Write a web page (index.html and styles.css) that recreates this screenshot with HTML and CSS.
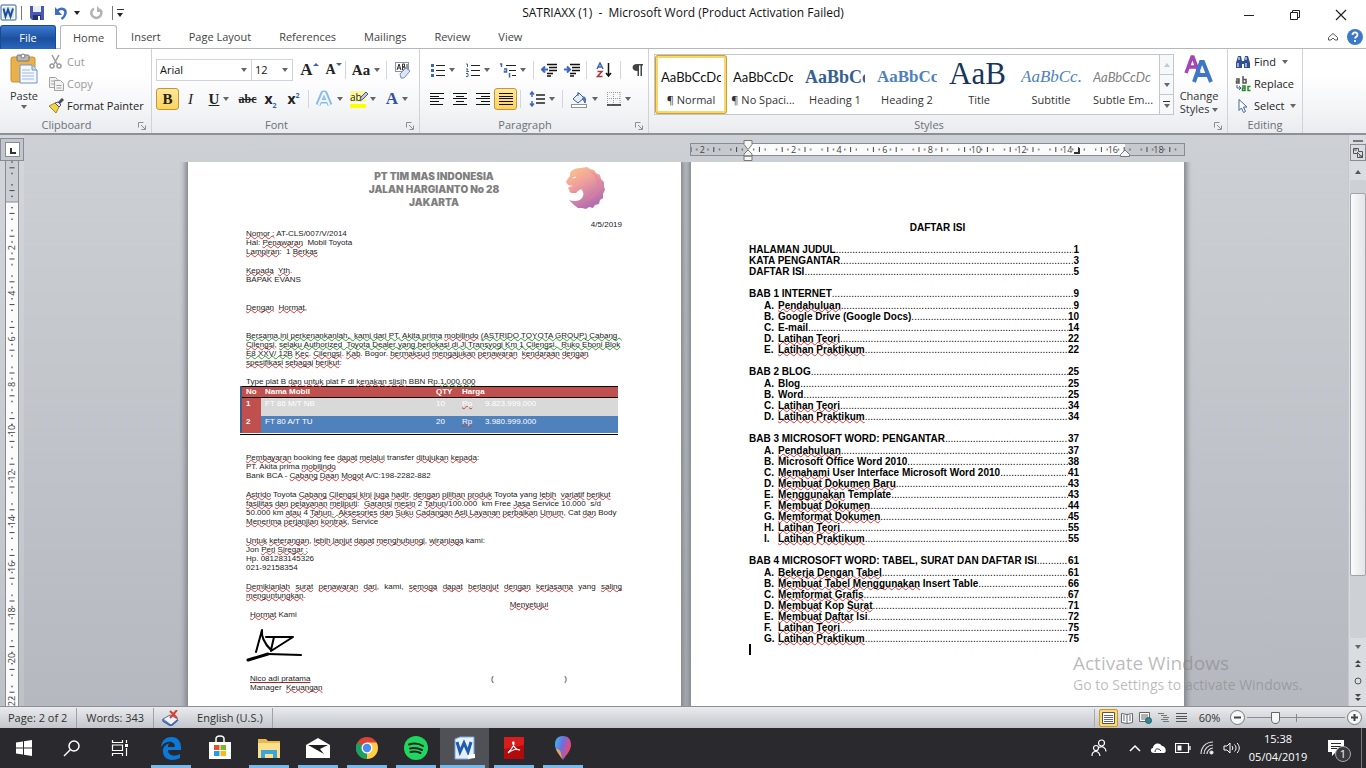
FILE: index.html
```html
<!DOCTYPE html>
<html lang="en">
<head>
<meta charset="utf-8">
<title>SATRIAXX (1) - Microsoft Word</title>
<link rel="stylesheet" href="styles.css">
</head>
<body>
<header class="titlebar">
  <div class="quick">
    <svg width="18" height="18" viewBox="0 0 18 18"><rect x="1" y="1" width="15" height="15" rx="1" fill="#fff" stroke="#2a5fa8"/><rect x="3" y="3" width="11" height="11" fill="#dce9f7"/><path d="M3.500 4.500l2 8 2.500-7 2.500 7 2.500-8" fill="none" stroke="#1f4f9b" stroke-width="2"/></svg>
    <i class="bar"></i>
    <button class="qbtn" aria-label="Save"><svg width="16" height="16" viewBox="0 0 16 16"><path d="M1 1h14v14H3l-2-2z" fill="#4a58b4"/><rect x="4" y="1" width="8" height="6" fill="#e9eefb"/><rect x="4" y="10" width="8" height="5" fill="#24306f"/><rect x="9" y="11" width="2" height="4" fill="#fff"/></svg></button>
    <button class="qbtn undo" aria-label="Undo"><svg width="14" height="14" viewBox="0 0 14 14"><path d="M3 5c4-4 9-2 8.500 2-.3 3-2 4.500-4 6" fill="none" stroke="#3f6cc4" stroke-width="2.500"/><path d="M1 1v8h7z" fill="#3f6cc4"/></svg><i class="tri dark"></i></button>
    <button class="qbtn" aria-label="Repeat"><svg width="14" height="14" viewBox="0 0 14 14"><path d="M4 2.500a5 5 0 1 0 6 1" fill="none" stroke="#b3b3b3" stroke-width="2.500"/><path d="M7 0v6h6z" fill="#b3b3b3"/></svg></button>
    <i class="bar"></i>
    <button class="more" aria-label="Customize Quick Access Toolbar"><i class="dash"></i><i class="tri dark"></i></button>
  </div>
  <h1>SATRIAXX (1)&nbsp; -&nbsp; Microsoft Word (Product Activation Failed)</h1>
  <div class="winbtns">
    <button aria-label="Minimize"><svg width="12" height="12"><path d="M1 6.500h10" stroke="#222"/></svg></button>
    <button aria-label="Restore"><svg width="12" height="12" fill="none" stroke="#222"><path d="M1.500 3.500h7v7h-7zM3.500 3v-1.500h7v7H9"/></svg></button>
    <button aria-label="Close"><svg width="12" height="12"><path d="M1 1l10 10M11 1L1 11" stroke="#222" stroke-width="1.200"/></svg></button>
  </div>
</header>

<nav class="tabs">
  <button class="file">File</button>
  <button class="on">Home</button>
  <button>Insert</button><button>Page Layout</button><button>References</button><button>Mailings</button><button>Review</button><button>View</button>
  <div class="help">
    <button aria-label="Minimize the Ribbon"><svg width="12" height="12" fill="none" stroke="#555"><path d="M1.500 6.500L6 2.500l4.500 4v2.500H8L6 7 4 9H1.500z"/></svg></button>
    <button aria-label="Help"><svg width="16" height="16"><circle cx="8" cy="8" r="8" fill="#3b78c9"/><path d="M5.500 6c0-3.500 5-3.500 5 0 0 1.500-2.500 2-2.500 3.500M8 11v2" fill="none" stroke="#fff" stroke-width="1.800"/></svg></button>
  </div>
</nav>

<section class="ribbon">
  <div class="group clip">
    <div class="body">
      <button class="big paste"><svg width="30" height="32" viewBox="0 0 30 32"><rect x="2" y="4" width="24" height="25" rx="2" fill="#e9b14c" stroke="#c48f35"/><rect x="8" y="2" width="12" height="6" rx="1" fill="#b9b9b9" stroke="#777"/><circle cx="14" cy="3" r="2" fill="#fff" stroke="#777"/><path d="M11 12h12l5 5v13H11z" fill="#f5f9ff" stroke="#6d94c9"/><path d="M23 12v5h5" fill="#cddff5" stroke="#6d94c9"/><path d="M13 17h8M13 20h12M13 23h12M13 26h12" stroke="#9bb9e0"/></svg><span>Paste</span><i class="tri"></i></button>
      <div class="stack">
        <button class="off"><svg width="16" height="16" fill="none" stroke="#9a9a9a" stroke-width="1.500"><path d="M4 1l5 9M11 1L6 10"/><circle cx="4" cy="12" r="2"/><circle cx="11" cy="12" r="2"/></svg>Cut</button>
        <button class="off"><svg width="16" height="16" fill="#f2f2f2" stroke="#a2a2a2"><path d="M1.500 1.500h6l2 2v8h-8z"/><path d="M6.500 4.500h6l3 3v7h-9zM8.500 9.500h5M8.500 12h5M3 5h3M3 8h3"/></svg>Copy</button>
        <button><svg width="16" height="16" viewBox="0 0 16 16"><path d="M1 8l6-3 4 4-3 6z" fill="#f1d24c" stroke="#a5832a"/><path d="M7 5l3-1 3 3-2 2z" fill="#e6e6ef" stroke="#555"/><path d="M11 5l4-4" stroke="#4a4a6a" stroke-width="3"/></svg>Format Painter</button>
      </div>
    </div>
    <footer>Clipboard<svg class="launch" width="8" height="8" fill="none" stroke="#8a8f96"><path d="M.5 5.500v-5h5M3 3l4 4M7.500 3.500v4h-4"/></svg></footer>
  </div>

  <div class="group font">
    <div class="body two">
      <div class="line">
        <label class="combo face"><select aria-label="Font"><option>Arial</option></select><i class="tri"></i></label>
        <label class="combo size"><select aria-label="Font size"><option>12</option></select><i class="tri"></i></label>
        <button class="t wide serif" aria-label="Grow Font"><b class="g16">A</b><i class="caret up"></i></button>
        <button class="t serif" aria-label="Shrink Font"><b class="g13">A</b><i class="caret"></i></button>
        <i class="sep"></i>
        <button class="t drop serif"><b class="g14">Aa</b><i class="tri"></i></button>
        <i class="sep"></i>
        <button class="t wide" aria-label="Clear Formatting"><svg width="18" height="18" viewBox="0 0 18 18"><rect x="1.500" y="1.500" width="13" height="9" fill="#fff" stroke="#8793a8"/><path d="M3 9l2-6 2 6M4 7h2M8.500 3v6h2.500V6H8.500h2V3zM13 3v6" fill="none" stroke="#333"/><path d="M6 13l6-6 4 3-6 7H7z" fill="#dbe6f8" stroke="#7d8fb5"/></svg></button>
      </div>
      <div class="line">
        <button class="t on serif"><b class="g14">B</b></button>
        <button class="t serif"><i class="g14 it">I</i></button>
        <button class="t drop serif"><u class="g14 bo">U</u><i class="tri"></i></button>
        <button class="t serif"><s class="g12 bo">abc</s></button>
        <button class="t"><b class="g13">x<sub>2</sub></b></button>
        <button class="t"><b class="g13">x<sup>2</sup></b></button>
        <i class="sep"></i>
        <button class="t drop" aria-label="Text Effects"><svg width="18" height="18" viewBox="0 0 18 18"><path d="M3 15L8 3h2l5 12M5 11h8" fill="none" stroke="#8dbbe8" stroke-width="5" stroke-linejoin="round"/><path d="M3.500 15L8.500 3h1l5 12M5.500 11h7" fill="none" stroke="#eef6fd" stroke-width="2"/></svg><i class="tri"></i></button>
        <button class="t drop" aria-label="Text Highlight Color"><span class="mark">ab</span><svg class="pen" width="10" height="11" viewBox="0 0 10 11"><path d="M1 10l1-4 5-5 2 2-5 5z" fill="#b9c8ea" stroke="#4a5b8c"/></svg><i class="tri"></i></button>
        <button class="t drop serif" aria-label="Font Color"><b class="g16 blue">A</b><i class="tri"></i></button>
      </div>
    </div>
    <footer>Font<svg class="launch" width="8" height="8" fill="none" stroke="#8a8f96"><path d="M.5 5.500v-5h5M3 3l4 4M7.500 3.500v4h-4"/></svg></footer>
  </div>

  <div class="group para">
    <div class="body two">
      <div class="line">
        <button class="t drop" aria-label="Bullets"><svg width="14" height="14"><path d="M5 2.500h9M5 7.500h9M5 12.500h9" stroke="#222"/><path d="M0 2.500h3M0 7.500h3M0 12.500h3" stroke="#3d66b0" stroke-width="3"/></svg><i class="tri"></i></button>
        <button class="t drop" aria-label="Numbering"><svg width="14" height="14"><path d="M5 2.500h9M5 7.500h9M5 12.500h9" stroke="#222"/><path d="M0 1h1.500v3M0 6h2L.5 8.500H3M0 10.500h2v3H0" stroke="#3d66b0" fill="none"/></svg><i class="tri"></i></button>
        <button class="t drop" aria-label="Multilevel List"><svg width="16" height="15"><path d="M6 2.500h10M9 7.500h7M12 12.500h4" stroke="#222"/><path d="M0 1h1.500v3M4 6h2.500v3H4.500V7.500M9.500 10v4.500" stroke="#3d66b0" fill="none" stroke-width="1.500"/></svg><i class="tri"></i></button>
        <i class="sep"></i>
        <button class="t" aria-label="Decrease Indent"><svg width="16" height="14"><path d="M6 1.500h10M8 4.500h8M8 7.500h8M6 10.500h6M6 13h4" stroke="#111" stroke-width="1.500"/><path d="M7 6.500H1M4 3.500l-3 3 3 3" fill="none" stroke="#3d66c0" stroke-width="2"/></svg></button>
        <button class="t" aria-label="Increase Indent"><svg width="16" height="14"><path d="M6 1.500h10M8 4.500h8M8 7.500h8M6 10.500h6M6 13h4" stroke="#111" stroke-width="1.500"/><path d="M0 6.500h6M3 3.500l3 3-3 3" fill="none" stroke="#3d66c0" stroke-width="2"/></svg></button>
        <i class="sep"></i>
        <button class="t wide" aria-label="Sort"><svg width="16" height="16" fill="none" stroke-width="1.500"><path d="M1 7l3-6 3 6M2 5h4" stroke="#3d66b0"/><path d="M1.500 9.500H6l-4.500 5h5" stroke="#a5393c"/><path d="M12.500 1v13M10 11l2.500 3 2.500-3" stroke="#111"/></svg></button>
        <i class="sep"></i>
        <button class="t wide" aria-label="Show/Hide"><svg width="11" height="13"><path d="M5 0h6v1.500H10V12H8.500V1.500H7V12H5.500V7C-1 7-1 0 5 0z" fill="#444"/></svg></button>
      </div>
      <div class="line">
        <button class="t" aria-label="Align Left"><svg width="14" height="12"><path d="M0 .5h14M0 3.500h9M0 5.500h14M0 8.500h9M0 11.500h13" stroke="#111"/></svg></button>
        <button class="t" aria-label="Center"><svg width="14" height="12"><path d="M0 .5h14M3 3.500h8M0 5.500h14M3 8.500h8M0 11.500h14" stroke="#111"/></svg></button>
        <button class="t" aria-label="Align Right"><svg width="14" height="12"><path d="M0 .5h14M5 3.500h9M0 5.500h14M5 8.500h9M0 11.500h14" stroke="#111"/></svg></button>
        <button class="t on" aria-label="Justify"><svg width="14" height="12"><path d="M0 .5h14M0 3.500h14M0 5.500h14M0 8.500h14M0 11.500h14" stroke="#111"/></svg></button>
        <i class="sep"></i>
        <button class="t drop" aria-label="Line Spacing"><svg width="16" height="16"><path d="M7 4h9M7 8h9M7 12h9" stroke="#222" stroke-width="1.500"/><path d="M3 1v5M1 3.500L3 1l2 2.500M3 15v-5M1 12.500L3 15l2-2.500" fill="none" stroke="#3d66c0" stroke-width="1.500"/></svg><i class="tri"></i></button>
        <i class="sep"></i>
        <button class="t drop" aria-label="Shading"><svg width="18" height="17"><path d="M3 8l6-6 5 5-6 5z" fill="#e4ecf8" stroke="#45608f"/><path d="M8 5V1M13 6c3 0 3 2 2 6-1-2-1-3-3-4" fill="#4f7cc4" stroke="#45608f"/><rect x="1.500" y="13.500" width="15" height="3" fill="#fff" stroke="#8b929c"/></svg><i class="tri"></i></button>
        <button class="t drop" aria-label="Borders"><svg width="14" height="14"><path d="M.5 0v13M6.500 0v13M13 0v13M0 .5h13M0 6.500h13" stroke="#999" stroke-dasharray="1 1"/><path d="M0 13h14" stroke="#222" stroke-width="1.500"/></svg><i class="tri"></i></button>
      </div>
    </div>
    <footer>Paragraph<svg class="launch" width="8" height="8" fill="none" stroke="#8a8f96"><path d="M.5 5.500v-5h5M3 3l4 4M7.500 3.500v4h-4"/></svg></footer>
  </div>

  <div class="group styles">
    <div class="body">
      <div class="gallery">
        <button class="cell on"><span class="pv cal">AaBbCcDc</span><span>¶ Normal</span></button>
        <button class="cell"><span class="pv cal">AaBbCcDc</span><span>¶ No Spaci...</span></button>
        <button class="cell"><span class="pv h1">AaBbCc</span><span>Heading 1</span></button>
        <button class="cell"><span class="pv h2">AaBbCc</span><span>Heading 2</span></button>
        <button class="cell"><span class="pv ti">AaB</span><span>Title</span></button>
        <button class="cell"><span class="pv st">AaBbCc.</span><span>Subtitle</span></button>
        <button class="cell"><span class="pv se">AaBbCcDc</span><span>Subtle Em...</span></button>
        <div class="roll"><button aria-label="Row up"><i class="tri up pale"></i></button><button aria-label="Row down"><i class="tri"></i></button><button aria-label="More styles"><i class="dash"></i><i class="tri"></i></button></div>
      </div>
      <button class="big change"><svg width="32" height="30" viewBox="0 0 32 30"><path d="M3 19L9 3h1l6 16M5 13h9" fill="none" stroke="#a545b5" stroke-width="3.500"/><path d="M11 28L18 8h2l8 20M14 21h12" fill="none" stroke="#3f77c4" stroke-width="4"/></svg><span>Change<br>Styles <i class="tri"></i></span></button>
    </div>
    <footer>Styles<svg class="launch" width="8" height="8" fill="none" stroke="#8a8f96"><path d="M.5 5.500v-5h5M3 3l4 4M7.500 3.500v4h-4"/></svg></footer>
  </div>

  <div class="group edit">
    <div class="body">
      <div class="stack">
        <button><svg width="16" height="16"><path d="M3 2h3l1 5h2l1-5h3l2 7v5h-6v-4H7v4H1V9z" fill="#2f4f91"/><path d="M3 9v4M11 9v4M4 3v3M11 3v3" stroke="#b8ccf0" stroke-width="1.500"/></svg>Find<i class="tri"></i></button>
        <button><svg width="16" height="16" fill="none" stroke-width="1.500"><path d="M1 3h3v4H1.500V5H4M8 0v7h3V3.500H8" stroke="#555"/><path d="M2 9v3h3M4 10l2 2-2 2" stroke="#3b5ea8" stroke-width="1"/><path d="M7 10h3v4.500H7.500V12H10M15.500 10.500H13v4h2.500" stroke="#2a8a2a"/></svg>Replace</button>
        <button><svg width="16" height="16"><path d="M4 1.500v11l2.500-2.500 2 4.500 2-1-2-4.500h3.500z" fill="#fff" stroke="#44659e"/></svg>Select<i class="tri"></i></button>
      </div>
    </div>
    <footer>Editing</footer>
  </div>
</section>

<main class="work">
  <aside class="vside">
    <button class="tabstop" aria-label="Tab selector"><i></i></button>
    <svg class="vruler" width="14" height="545" viewBox="0 0 140 5450">
      <defs><pattern id="cmv" width="140" height="228" y="410" patternUnits="userSpaceOnUse"><path d="M60 57h20M45 114h50M60 171h20" stroke="#444" stroke-width="10"/></pattern></defs>
      <rect width="140" height="5450" fill="#fbfbfc"/><rect width="140" height="410" fill="#cbced3"/>
      <rect width="140" height="5450" fill="url(#cmv)"/>
      <path d="M5 0v5450M135 0v5450M0 410h140" stroke="#868d96" stroke-width="10"/>
      <g class="nums"><text transform="translate(102 866) rotate(-90)">2</text><text transform="translate(102 1322) rotate(-90)">4</text><text transform="translate(102 1778) rotate(-90)">6</text><text transform="translate(102 2234) rotate(-90)">8</text><text transform="translate(102 2690) rotate(-90)">10</text><text transform="translate(102 3146) rotate(-90)">12</text><text transform="translate(102 3602) rotate(-90)">14</text><text transform="translate(102 4058) rotate(-90)">16</text><text transform="translate(102 4514) rotate(-90)">18</text><text transform="translate(102 4970) rotate(-90)">20</text><text transform="translate(102 5400) rotate(-90)">22</text></g>
    </svg>
  </aside>

  <div class="canvas">
    <div class="rulerrow">
      <svg class="hruler" width="495" height="24" viewBox="0 0 4950 240">
        <defs><pattern id="cmh" width="228" height="120" x="580" y="60" patternUnits="userSpaceOnUse"><path d="M57 55v20M114 40v50M171 55v20" stroke="#444" stroke-width="10"/></pattern></defs>
        <rect x="5" y="65" width="4940" height="120" fill="#c6cacf"/><rect x="580" y="65" width="3770" height="120" fill="#fbfbfc"/>
        <rect x="5" y="60" width="4900" height="120" fill="url(#cmh)"/>
        <rect x="5" y="65" width="4940" height="120" fill="none" stroke="#868d96" stroke-width="10"/>
        <g class="nums"><text x="124" y="160">2</text><text x="1036" y="160">2</text><text x="1492" y="160">4</text><text x="1948" y="160">6</text><text x="2404" y="160">8</text><text x="2860" y="160">10</text><text x="3316" y="160">12</text><text x="3772" y="160">14</text><text x="4228" y="160">16</text><text x="4684" y="160">18</text></g>
        <g fill="#f4f4f4" stroke="#777" stroke-width="10"><path d="M540 35h80v40l-40 50-40-50zM580 130l40 40v20h-80v-20zM540 190h80v45h-80zM4350 130l45 45v20h-90v-20z"/></g>
        <path d="M3840 160h50v-50" fill="none" stroke="#333" stroke-width="20"/>
      </svg>
    </div>
    <div class="pages">
      <article class="page letter">
        <div class="kop">PT TIM MAS INDONESIA<br>JALAN HARGIANTO No 28<br>JAKARTA
          <svg class="lion" width="40" height="42" viewBox="0 0 40 42"><defs><linearGradient id="lg" x1="0" y1="0" x2=".5" y2="1"><stop offset="0" stop-color="#fdc98c"/><stop offset=".45" stop-color="#f0a09b"/><stop offset="1" stop-color="#b46cae"/></linearGradient></defs><path d="M5 6C7 2 12 1 16 1l6-1 3 2 4 1 2 3 4 2 1 4 3 3v4l1 4-2 4v4l-3 2-1 4-4 1-2 3-4-1-3 2-4-1H13l-4-3-5-5C9 35 15 34 17 31 19 28 19 25 16 22L13 24 11 26H6L4 24l1-1-2-1 1-2 4-1-5-1-2-3 1-2 3-4z" fill="url(#lg)"/><path d="M24 4c7 4 10 11 7 18s-8 10-13 12c9-1 17-7 17-15S31 6 24 4z" fill="#e07f9c" opacity=".5"/><path d="M8 11l3-1" fill="none" stroke="#fff"/></svg>
        </div>
        <time>4/5/2019</time>
        <p class="g1"><s>Nomor :</s> AT-CLS/007/V/2014<br>Hal: <s>Penawaran</s>&nbsp; Mobil Toyota<br><s>Lampiran</s>:&nbsp; 1 <s>Berkas</s></p>
        <p><s>Kepada</s>&nbsp; <s>Yth</s>.<br>BAPAK EVANS</p>
        <p class="far"><s>Dengan</s>&nbsp; <s>Hormat</s>,</p>
        <p class="far"><s class="g">Bersama ini perkenankanlah,&nbsp; kami dari PT. Akita prima</s> <s>mobilindo</s> <s class="g">(ASTRIDO TOYOTA GROUP) Cabang&nbsp;&nbsp;</s><br><s>Cilengsi</s>, <s class="g">selaku Authorized&nbsp; Toyota Dealer yang berlokasi di Jl Transyogi Km 1 Cilengsi.&nbsp; Ruko Eboni Blok</s><br><s class="g">E8 XXV/ 12B</s> <s>Kec</s>. <s>Cilengsi</s>. <s>Kab</s>. Bogor. <s>bermaksud</s> <s>mengajukan</s> <s>penawaran</s>&nbsp; <s>kendaraan</s> <s>dengan</s><br><s>spesifikasi</s> <s>sebagai</s> <s>berikut</s>:</p>
        <p>Type plat B <s>dan</s> <s>untuk</s> plat F di <s>kenakan</s> <s>slisih</s> BBN Rp.<s class="g">1.000.000</s></p>
        <div class="tablebox"><table>
          <thead><tr><th class="c1">No</th><th>Nama Mobil</th><th class="c3">QTY</th><th class="c4"><s>Harga</s></th><th class="c5"></th></tr></thead>
          <tbody><tr class="gray"><th>1</th><td>FT 86 M/T NB</td><td>10</td><td><s>Rp</s></td><td>9.823.999.000</td></tr>
          <tr class="blu"><th>2</th><td>FT 80 A/T TU</td><td>20</td><td><s>Rp</s></td><td>3.980.999.000</td></tr></tbody>
        </table></div>
        <p class="after"><s>Pembayaran</s> booking fee <s>dapat</s> <s>melalui</s> transfer <s>ditujukan</s> <s>kepada</s>:<br>PT. Akita prima <s>mobilindo</s><br>Bank BCA - <s>Cabang</s> <s>Daan</s> <s>Mogot</s> A/C:198-2282-882</p>
        <p><s>Astrido</s> Toyota <s>Cabang</s> <s>Cilengsi kini</s> <s>juga</s> <s>hadir</s>, <s>dengan</s> <s>pilihan</s> <s>produk</s> Toyota yang <s>lebih</s>&nbsp; <s>variatif</s> <s>berikut</s><br><s>fasilitas</s> <s>dan</s> <s>pelayanan</s> <s>meliputi</s>:&nbsp; <s>Garansi</s> <s>mesin</s> 2 <s>Tahun</s>/100.000&nbsp; km Free <s>Jasa</s> Service 10.000&nbsp; s/d<br>50.000 km <s>atau</s> 4 <s>Tahun</s><s class="g">. &nbsp;</s><s>Aksesories</s> <s>dan</s> <s>Suku</s> <s>Cadangan</s> <s>Asli Layanan</s> <s>perbaikan</s> <s>Umum</s>, Cat <s>dan</s> Body<br><s>Menerima</s> <s>perjanjian</s> <s>kontrak</s>, Service</p>
        <p><s>Untuk</s> <s>keterangan</s>, <s>lebih lanjut</s> <s>dapat</s> <s>menghubungi</s>, <s>wiraniaga</s> kami:<br>Jon <s>Peri</s> <s>Siregar</s><s class="g"> :</s><br>Hp. 081283145326<br>021-92158354</p>
        <p class="just"><s>Demikianlah</s> <s>surat</s> <s>penawaran</s> <s>dari</s>, kami, <s>semoga</s> <s>dapat</s> <s>berlanjut</s> <s>dengan</s> <s>kerjasama</s> yang <s>saling</s> <s>menguntungkan</s>.</p>
        <div class="sign">
          <div><span><s>Hormat</s> Kami</span>
            <svg width="58" height="34" viewBox="0 0 58 34" fill="none" stroke="#000" stroke-width="2" stroke-linecap="round" stroke-linejoin="round"><path d="M10 24L16 2M16 2c-1 8 3 14 9 20M20 9h27L25 23M28 9l-3 13M22 26l33 1"/><path d="M2 32l20-6" stroke-width="3"/></svg>
            <span><s class="name">Nico adi pratama</s><br>Manager&nbsp; <s>Keuangan</s></span></div>
          <div class="right"><span><s>Menyetujui</s></span><span class="paren"><i>(</i><i>)</i></span></div>
        </div>
      </article>

      <article class="page toc">
        <h2>DAFTAR ISI</h2>
        <ul class="top"><li><a href="#">HALAMAN JUDUL</a><b>1</b></li><li><a href="#">KATA PENGANTAR</a><b>3</b></li><li><a href="#">DAFTAR ISI</a><b>5</b></li></ul>
        <ul><li><a href="#">BAB 1 INTERNET</a><b>9</b></li></ul>
        <ol><li><a href="#"><s>Pendahuluan</s></a><b>9</b></li><li><a href="#">Google Drive (Google Docs)</a><b>10</b></li><li><a href="#">E-mail</a><b>14</b></li><li><a href="#"><s>Latihan Teori</s></a><b>22</b></li><li><a href="#"><s>Latihan Praktikum</s></a><b>22</b></li></ol>
        <ul><li><a href="#">BAB 2 BLOG</a><b>25</b></li></ul>
        <ol><li><a href="#">Blog</a><b>25</b></li><li><a href="#">Word</a><b>25</b></li><li><a href="#"><s>Latihan Teori</s></a><b>34</b></li><li><a href="#"><s>Latihan Praktikum</s></a><b>34</b></li></ol>
        <ul><li><a href="#">BAB 3 MICROSOFT WORD: PENGANTAR</a><b>37</b></li></ul>
        <ol><li><a href="#"><s>Pendahuluan</s></a><b>37</b></li><li><a href="#">Microsoft Office Word 2010</a><b>38</b></li><li><a href="#"><s>Memahami</s> User Interface Microsoft Word 2010</a><b>41</b></li><li><a href="#"><s>Membuat Dokumen Baru</s></a><b>43</b></li><li><a href="#"><s>Menggunakan</s> Template</a><b>43</b></li><li><a href="#"><s>Membuat Dokumen</s></a><b>44</b></li><li><a href="#"><s>Memformat Dokumen</s></a><b>45</b></li><li><a href="#"><s>Latihan Teori</s></a><b>55</b></li><li><a href="#"><s>Latihan Praktikum</s></a><b>55</b></li></ol>
        <ul><li><a href="#">BAB 4 MICROSOFT WORD: TABEL, SURAT DAN DAFTAR ISI</a><b>61</b></li></ul>
        <ol><li><a href="#"><s>Bekerja Dengan Tabel</s></a><b>61</b></li><li><a href="#"><s>Membuat Tabel Menggunakan</s> Insert Table</a><b>66</b></li><li><a href="#"><s>Memformat Grafis</s></a><b>67</b></li><li><a href="#"><s>Membuat</s> Kop <s>Surat</s></a><b>71</b></li><li><a href="#"><s>Membuat Daftar</s> Isi</a><b>72</b></li><li><a href="#"><s>Latihan Teori</s></a><b>75</b></li><li><a href="#"><s>Latihan Praktikum</s></a><b>75</b></li></ol>
        <div class="cursor"></div>
      </article>
    </div>
    <div class="watermark"><strong>Activate Windows</strong><span>Go to Settings to activate Windows.</span></div>
  </div>

  <aside class="vscroll">
    <i class="split"></i>
    <button class="rbtn" aria-label="View Ruler"><svg width="12" height="12" fill="none" stroke="#555"><path d="M1.500 1.500h5v3h4v6h-5v-4h-4zM5 5l6 6M2 3h3M7 9h3"/></svg></button>
    <button class="arrow" aria-label="Scroll up"><i class="tri up"></i></button>
    <div class="track"><div class="thumb"></div></div>
    <button class="arrow" aria-label="Scroll down"><i class="tri"></i></button>
    <button aria-label="Previous Page"><svg width="8" height="9"><path d="M1 4l3-3 3 3zM1 8l3-3 3 3z" fill="#444"/></svg></button>
    <button aria-label="Select Browse Object"><svg width="8" height="8"><circle cx="4" cy="4" r="3" fill="none" stroke="#555"/></svg></button>
    <button aria-label="Next Page"><svg width="8" height="9"><path d="M1 1l3 3 3-3zM1 5l3 3 3-3z" fill="#444"/></svg></button>
  </aside>
</main>

<div class="status">
  <button class="st1">Page: 2 of 2</button><button class="st1">Words: 343</button>
  <button class="proof" aria-label="Proofing errors"><svg width="18" height="16"><path d="M1 9l7-4 8 4-7 6z" fill="#eef3fb" stroke="#5570a8"/><path d="M1 9v2l8 5 7-6" fill="none" stroke="#3d66b0" stroke-width="1.500"/><path d="M8 1l7 7M15 0L8 8" stroke="#d8412f" stroke-width="2"/></svg></button>
  <button class="lang">English (U.S.)</button>
  <div class="views">
    <button class="on" aria-label="Print Layout"><svg width="13" height="12"><path d="M.5.500h12v11H.5z" fill="#fff" stroke="#555"/><path d="M2 3.500h9M2 5.500h9M2 7.500h9M2 9.500h9" stroke="#666"/></svg></button>
    <button aria-label="Full Screen Reading"><svg width="12" height="12" fill="#fff" stroke="#666"><path d="M.5 1.500L6 2.500l5.500-1v9L6 11.500l-5.500-1zM6 2v9M2 4h2M2 6h2M2 8h2M8 4h2M8 6h2M8 8h2"/></svg></button>
    <button aria-label="Web Layout"><svg width="13" height="12"><path d="M.5.500h10v9H.5zM2 3h7M2 5h7M2 7h5" fill="#fff" stroke="#666"/><circle cx="9.500" cy="8.500" r="3" fill="#2f8a84" stroke="#26598a"/></svg></button>
    <button aria-label="Outline"><svg width="11" height="11"><path d="M0 1.500h6M3 3.500h6M5 5.500h6M3 7.500h7M5 9.500h6" stroke="#777"/></svg></button>
    <button aria-label="Draft"><svg width="11" height="11"><path d="M0 1.500h11M0 4.500h11M0 6.500h11M0 9.500h11" stroke="#555"/></svg></button>
  </div>
  <button class="pct">60%</button>
  <div class="zoom"><button aria-label="Zoom out"><svg width="17" height="17"><circle cx="8.500" cy="8.500" r="7" fill="#f6f7f8" stroke="#777"/><path d="M5 8.500h7" stroke="#444" stroke-width="2"/></svg></button><input type="range" min="0" max="100" value="27" aria-label="Zoom"><button aria-label="Zoom in"><svg width="17" height="17"><circle cx="8.500" cy="8.500" r="7" fill="#f6f7f8" stroke="#777"/><path d="M5 8.500h7M8.500 5v7" stroke="#444" stroke-width="2"/></svg></button></div>
</div>

<footer class="taskbar">
  <button aria-label="Start"><svg width="18" height="18"><path d="M1 3.500L8 2.500V8.500H1zM9 2.300L17 1v7.500H9zM1 9.500h7v6L1 14.500zM9 9.500h8V17L9 15.800z" fill="#fff"/></svg></button>
  <button aria-label="Search"><svg width="18" height="18" fill="none" stroke="#fff" stroke-width="1.500"><circle cx="11" cy="7" r="5"/><path d="M7.500 10.500L1 17"/></svg></button>
  <button aria-label="Task View"><svg width="18" height="18" fill="none" stroke="#fff" stroke-width="1.200"><path d="M1.500 1v2.500h10V1M1.500 17v-2.500h10V17M1.500 6h10v5.500h-10zM15.500 1v3M15.500 9v8"/><path d="M14 6.500h3" stroke-width="3"/></svg></button>
  <button class="app run" aria-label="Edge"><svg width="22" height="24" viewBox="0 0 22 24"><path d="M1 11C2 4 6 1 11.500 1 18 1 21 6 21 11v3H8c0 6 7 7 12 4v4C10 27 2 22 3 14c.5-4 4-6 7-7-2 1-2 2-2 4h7c0-7-10-7-14 0z" fill="#0b79d8"/></svg></button>
  <button class="app" aria-label="Store"><svg width="24" height="26"><path d="M8 8V4c0-4 8-4 8 0v4" fill="none" stroke="#fff" stroke-width="1.500"/><path d="M1 7h22v17H1z" fill="#fff"/><path d="M6 10h5.500v5H6z" fill="#e84f25"/><path d="M12.500 10H18v5h-5.500z" fill="#7cb829"/><path d="M6 16h5.500v5H6z" fill="#1f9fe4"/><path d="M12.500 16H18v5h-5.500z" fill="#f9b814"/></svg></button>
  <button class="app run" aria-label="File Explorer"><svg width="24" height="22"><path d="M1 2h8l2 2h12v17H1z" fill="#eab84c"/><path d="M1 6h22v15H1z" fill="#fbdf8a"/><path d="M4 21v-8h16v8h-4v-4H8v4z" fill="#39a5da"/></svg></button>
  <button class="app run" aria-label="Mail"><svg width="24" height="22"><path d="M0 8l12-7 12 7v13H0z" fill="#fff"/><path d="M2 8h20l-8 4 4 5z" fill="#1f1f22"/></svg></button>
  <button class="app run" aria-label="Chrome"><svg width="24" height="24" viewBox="0 0 24 24"><circle cx="12" cy="12" r="11" fill="#dc4437"/><path d="M12 12L2.500 6.500A11 11 0 0 0 12 23z" fill="#1da160"/><path d="M12 12v11A11 11 0 0 0 21.500 6.500H12z" fill="#ffce43"/><path d="M2.500 6.500L7 14l5 3-3 5.500A11 11 0 0 1 2.500 6.500z" fill="#1da160"/><circle cx="12" cy="12" r="5.500" fill="#fff"/><circle cx="12" cy="12" r="4.200" fill="#4b8bf4"/></svg></button>
  <button class="app run" aria-label="Spotify"><svg width="24" height="24"><circle cx="12" cy="12" r="12" fill="#1ed760"/><path d="M5 8.500c5-1.500 10-1 14 1.500M6 12.500c4-1 8-.5 12 1.500M6.500 16c4-1 7-.5 10 1" fill="none" stroke="#222" stroke-width="2" stroke-linecap="round"/></svg></button>
  <button class="app run active" aria-label="Word"><svg width="22" height="24"><path d="M1 3l5-2h14v18l-5 4H1z" fill="#e6f0fc" stroke="#7ba5dc"/><path d="M3 6l3 10 4-9 4 9 3-10" fill="none" stroke="#1f5cae" stroke-width="3"/><path d="M14 19l7-1v4l-7 1z" fill="#fff"/></svg></button>
  <button class="app run" aria-label="Adobe Reader"><svg width="22" height="24"><rect x="1" y="1" width="20" height="22" fill="#b30b0b"/><path d="M1 1h20v8L1 13z" fill="#d91d1d"/><path d="M5 17c2-3 6-6 6-10 0-2-2-1-1 1 1 3 3 6 7 6-4-2-8 0-12 3z" fill="none" stroke="#fff" stroke-width="1.200"/></svg></button>
  <button class="app run" aria-label="Paint 3D"><svg width="20" height="26" viewBox="0 0 20 26"><defs><linearGradient id="p3" x1="0" y1="0" x2="1" y2=".4"><stop offset="0" stop-color="#35c4f2"/><stop offset=".5" stop-color="#6b6fe0"/><stop offset="1" stop-color="#f3476a"/></linearGradient></defs><path d="M10 1c6 0 8 4 8 9 0 5-4 9-8 15C6 19 2 15 2 10c0-5 2-9 8-9z" fill="url(#p3)"/><path d="M3 14c4 0 5 2 6 10C6 19 4 17 3 14z" fill="#f5a04a"/></svg></button>
  <div class="tray">
    <button class="people" aria-label="People"><svg width="16" height="18" fill="none" stroke="#fff" stroke-width="1.200"><circle cx="10.500" cy="4" r="3"/><circle cx="5" cy="9" r="2.500"/><path d="M1 17c0-6 7-6 8 0M8 8.500c3-2 7 0 7 4"/></svg></button>
    <button aria-label="Show hidden icons"><svg width="14" height="9" fill="none" stroke="#fff" stroke-width="1.500"><path d="M2 7l5-5 5 5"/></svg></button>
    <button aria-label="OneDrive"><svg width="18" height="12"><path d="M4 11C0 11 0 6 3 6c0-4 6-7 9-2 4 0 5 7 2 7z" fill="#fff"/><path d="M5 10c0-4 4-4 6-1" fill="none" stroke="#29292d"/></svg></button>
    <button aria-label="Battery"><svg width="16" height="10"><path d="M.5.500h13v9H.5zM15 3v4" fill="none" stroke="#fff" stroke-width="1.200"/><path d="M2.500 2.500h4v5h-4z" fill="#fff"/></svg></button>
    <button aria-label="Network"><svg width="14" height="14" fill="none" stroke="#ddd" stroke-width="1.200"><path d="M1 13C1 6 6 1 13 1M4 13c0-5 4-9 9-9M7 13c0-3 3-6 6-6"/><circle cx="11.500" cy="11.500" r="1.500" fill="#fff"/></svg></button>
    <button aria-label="Volume"><svg width="17" height="14" fill="none" stroke="#fff"><path d="M1 5h3l3-3v10L4 9H1zM9 5c1 1 1 3 0 4M11.500 3.500c2 2 2 5 0 7M14 2c3 3 3 7 0 10"/></svg></button>
    <div class="clock"><time>15:38</time><time>05/04/2019</time></div>
    <button class="notes" aria-label="Notifications"><svg width="18" height="18"><path d="M0 1h16v12H8l-4 4v-4H0z" fill="#fff"/><path d="M3 4.500h10M3 7.500h10M3 9.500h6" stroke="#29292d"/></svg><span>1</span></button>
    <button class="peek" aria-label="Show desktop"></button>
  </div>
</footer>
</body>
</html>
```
FILE: styles.css
```css
*{box-sizing:border-box}
body{margin:0;height:100vh;min-height:500px;overflow:hidden;display:flex;flex-direction:column;font:12px/16px "Open Sans","Noto Sans",sans-serif;color:#333;background:#fff}
button{font:inherit;color:inherit;background:none;border:0;padding:0;margin:0;display:flex;align-items:center;justify-content:center;white-space:nowrap}
svg{display:block;flex:none}
a{color:inherit;text-decoration:none}
.tri{flex:none;width:0;height:0;border:3px solid transparent;border-top:4px solid #666;border-bottom:0}
.tri.dark{border-top-color:#222}
.tri.up{border-top:0;border-bottom:4px solid #555}
.tri.up.pale{border-bottom-color:#c4c7cb}
.dash{display:block;width:7px;height:1px;background:#333}

.titlebar{display:grid;grid-template-columns:1fr auto 1fr;align-items:center;height:25px;flex:none}
.titlebar h1{margin:0;font-size:12px;line-height:24px;font-weight:400;color:#111}
.quick{display:flex;align-items:center;gap:6px;height:23px}
.bar{width:1px;height:14px;background:#777}
.quick>.bar:first-of-type{margin-left:-3px}
.qbtn{height:20px;width:18px}
.undo{width:30px;gap:6px}
.more{flex-direction:column;gap:3px;width:10px;margin-left:-4px}
.winbtns{display:flex;justify-content:flex-end;padding:4px 2px 0 0}
.winbtns button{width:46px;height:20px}

.tabs{display:flex;height:24px;flex:none;font-size:11px;color:#444;border-bottom:1px solid #b4b8bd}
.tabs>button{padding:0 14px;height:24px}
.tabs>.file{width:56px;margin-right:4px;background:linear-gradient(#3b7ad0,#1d4f9f 55%,#2a68bd);border:1px solid #1c4a92;border-bottom:0;border-radius:3px 3px 0 0;color:#fff}
.tabs>.on{background:#fff;border:1px solid #b4b8bd;border-bottom:0;border-radius:3px 3px 0 0;height:25px;padding:0 12px}
.help{margin-left:auto;display:flex;gap:8px;padding-right:3px;align-items:center}

.ribbon{display:flex;height:86px;flex:none;font-size:11px;background:linear-gradient(#fff 30%,#f4f5f7 70%,#e9ebee);border-bottom:2px solid #8c9198}
.group{display:flex;flex-direction:column;border-right:1px solid #cfd3d8;position:relative;flex:none}
.group>.body{display:flex;height:69px;padding-top:2px}
.group>footer{text-align:center;color:#6b7178;line-height:16px;padding-right:18px}
.launch{position:absolute;right:5px;bottom:3px}
.clip{width:152px}.font{width:268px}.para{width:229px}.styles{width:579px}.edit{width:75px}
.edit>footer{padding-right:0}
.big{flex-direction:column;justify-content:flex-start;line-height:13px;color:#333}
.paste{width:48px;padding-top:2px}
.paste span{margin:4px 0 3px}
.stack{display:flex;flex-direction:column}
.stack button{height:22px;gap:3px;justify-content:flex-start;color:#222}
.stack .off{color:#999}
.stack .tri{margin-left:3px}
.two.body{flex-direction:column;gap:7px;padding:10px 4px 0}
.group>.two.body{padding-top:10px}
.line{display:flex;height:22px;align-items:center}
.sep{width:1px;height:18px;background:#d3d6da;margin:0 3px;flex:none}
.t{width:23px;height:22px;position:relative;flex:none;color:#222}
.t.wide{width:25px}
.t.drop{width:34px;gap:4px}
.t.on{background:linear-gradient(#ffe69a,#fdd35b);border:1px solid #c2973b;border-radius:3px}
.serif{font-family:"Liberation Serif",serif}
.g12{font-size:12px}.g13{font-size:14px}.g14{font-size:15px}.g16{font-size:17px}
.it{font-style:italic;font-weight:400}.bo{font-weight:700}.blue{color:#2f529c}
.t sub,.t sup{font-size:7px;line-height:0;color:#2f60b8}
.caret{position:absolute;right:0;top:4px;border:3px solid transparent;border-top-color:#3d66b0;border-bottom:0}
.caret.up{border-bottom:3px solid #3d66b0;border-top:0}
.mark{background:linear-gradient(#fff799 65%,#fff 65% 76%,#ff0 76%);font-size:10px;line-height:12px;height:17px;width:16px;text-align:left}
.pen{position:absolute;left:13px;top:3px}
.combo{display:flex;align-items:center;border:1px solid #cfd3d8;height:22px;background:#fff;position:relative}
.combo select{appearance:none;border:0;background:none;font:inherit;width:100%;padding:0 3px;color:#111;outline:0}
.combo .tri{position:absolute;right:4px}
.face{width:98px}.size{width:43px;margin-left:-1px;margin-right:1px}
.para .two{padding-left:5px}
.para .t.wide{width:27px}
.para .t.drop{width:35px}

.gallery{display:flex;border:1px solid #c3c7cc;height:61px;margin:3px 0 0 5px;background:#fff}
.cell{flex-direction:column;justify-content:flex-start;width:72px;border:1px solid transparent;line-height:16px;padding-top:6px}
.cell.on{border:3px solid #fcd768;outline:1px solid #c8a23f;outline-offset:-1px;border-radius:3px;padding-top:4px}
.cell .pv{display:block;width:60px;height:30px;line-height:30px;overflow:hidden;text-align:left;color:#111}
.cell .cal{font-family:Lato,sans-serif;font-size:13px}
.cell .h1{font-family:"Liberation Serif",serif;font-weight:700;font-size:18px;color:#365f91}
.cell .h2{font-family:"Liberation Serif",serif;font-weight:700;font-size:17px;color:#4f81bd}
.cell .ti{font-family:"Liberation Serif",serif;font-size:31px;line-height:24px;color:#17365d}
.cell .st{font-family:"Liberation Serif",serif;font-style:italic;font-size:17px;color:#4f81bd}
.cell .se{font-family:Lato,sans-serif;font-style:italic;font-size:13px;color:#808080}
.roll{display:flex;flex-direction:column;width:14px;border-left:1px solid #c3c7cc}
.roll button{flex:1;flex-direction:column;gap:2px;border-bottom:1px solid #c3c7cc;background:#f7f8f9}
.roll button:last-child{border-bottom:0}
.change{width:50px;padding-top:3px}
.change>span{margin-top:5px}
.change .tri{display:inline-block;vertical-align:middle}
.edit .stack{padding-left:7px}

.work{flex:1;min-height:0;display:flex;background:linear-gradient(#cdd0d5,#b5b9bf);overflow:hidden}
.vside{width:24px;flex:none;display:flex;flex-direction:column;align-items:center;padding-top:3px;overflow:hidden;background:#ffffff22}
.tabstop{flex:none;width:24px;height:23px;border:1px solid #868d96;background:#c3c7cc}
.tabstop i{width:15px;height:15px;border:1px solid #868d96;background:linear-gradient(#333,#333) 4px 5px/2px 6px no-repeat,linear-gradient(#333,#333) 4px 9px/6px 2px no-repeat,#fff}
.nums text{font:90px "Open Sans",sans-serif;fill:#444;text-anchor:middle}
.canvas{flex:1;min-width:0;display:flex;flex-direction:column;position:relative}
.rulerrow{display:flex;justify-content:center;height:27px;padding:2px 0 0 502px;flex:none}
.pages{flex:1;min-height:0;display:flex;gap:10px;justify-content:center;overflow:hidden}
.page{flex:0 1 493px;min-width:0;background:#fff;height:1000px;box-shadow:0 0 5px 3px #84888d;font-family:"Liberation Sans",Arial,sans-serif}
.letter{padding:8px 59px 0 58px;font-size:8px;line-height:9px;color:#222;white-space:nowrap}
.letter s,.toc s{text-decoration:underline wavy #d33 1px;text-decoration-skip-ink:none;text-underline-offset:-1px}
.letter s.g{text-decoration-color:#2d9a2d}
.letter s.name{text-decoration:underline solid #a22 1px;text-underline-offset:1px}
.kop{position:relative;text-align:center;font-family:Inter,sans-serif;font-weight:900;font-size:10px;line-height:13px;color:#808080}
.lion{position:absolute;right:17px;top:-3px}
.letter>time{display:block;text-align:right;margin-top:11px}
.letter p{margin:10px 0 0}
.letter p.g1{margin-top:0}
.letter p.far{margin-top:19px}
.letter p.after{margin-top:18px}
.letter p.just{text-align:justify;white-space:normal}
.tablebox{margin:0 4px 0 -6px;border-bottom:1px solid #000;padding-bottom:1px}
.letter table{width:100%;border-collapse:collapse;table-layout:fixed;border-left:2px solid #385d8a;color:#fff;text-align:left}
.letter th,.letter td{padding:0 0 0 4px;vertical-align:top;line-height:9px}
.letter thead th{background:#c0504d;border-top:1px solid #000;border-bottom:1px solid #000;height:11px}
.c1{width:20px}.c3{width:26px}.c4{width:23px}.c5{width:137px}
.letter tbody th,.letter tbody td{padding-top:1px;height:18px}
.letter tbody th{background:#c0504d}
.gray td{background:#d9d9d9}
.blu td{background:#4f81bd}
.letter .blu>*{height:17px}
.sign{display:flex;justify-content:space-between;padding:0 55px 0 4px}
.sign>div{display:flex;flex-direction:column}
.sign>div:first-child{padding-top:10px}
.sign svg{margin:9px 0 12px -4px}
.right{width:76px}
.right>span{text-align:center}
.right>.paren{display:flex;justify-content:space-between;margin-top:65px}
.paren i{font-style:normal}

.toc{padding:60px 58px 0;font-size:10px;line-height:11px;font-weight:700;color:#000}
.toc h2{margin:0 0 11px;font-size:10px;line-height:11px;text-align:center}
.toc ul,.toc ol{list-style:none;margin:0 47px 0 0;padding:0}
.toc ul{margin-top:11px}
.toc ol{margin-top:1px;padding-left:15px;counter-reset:item}
.toc li{display:flex;white-space:pre}
.toc ol li::before{counter-increment:item;content:counter(item,upper-alpha) ".";width:14px;flex:none}
.toc li a{display:contents}
.toc li a::after{content:"........................................................................................................................";flex:1 1 0;min-width:0;overflow:hidden;font-weight:400}
.cursor{width:2px;height:11px;background:#000}
.watermark{position:absolute;right:39px;bottom:11px;min-width:236px;color:#80808088;display:flex;flex-direction:column;pointer-events:none}
.watermark strong{font-weight:400;font-size:19px;line-height:24px}
.watermark span{font-size:14px;line-height:20px}

.vscroll{width:18px;flex:none;display:flex;flex-direction:column;align-items:center;background:#d9dce0;border-left:1px solid #c5c9ce;padding-top:5px}
.split{width:10px;height:2px;background:#777;flex:none}
.vscroll button{height:17px;width:16px;flex:none}
.vscroll .rbtn{height:17px;border:1px solid #868d96;margin:2px 0 2px}
.track{flex:1;width:16px;background:#cdd0d4;padding-top:13px;border-radius:2px}
.thumb{height:86%;border:1px solid #9fa4aa;border-radius:2px;background:linear-gradient(90deg,#fafbfb,#e2e4e7)}

.status{display:flex;align-items:center;height:22px;flex:none;font-size:11px;background:linear-gradient(#e9ebee,#c3c6cb);border-top:1px solid #8c9198;padding-right:3px}
.status .st1,.status .lang{height:20px;border-right:1px solid #9fa3a9;padding:0 9px}
.status .st1:first-child{padding-left:8px}
.status .proof{width:34px}
.views{margin-left:auto;display:flex;border-left:1px solid #aaa;padding-left:4px}
.views button{width:18px;height:18px}
.views .on{background:#fddb70;border:1px solid #c2973b;border-radius:2px;width:19px}
.pct{width:39px}
.zoom{display:flex;align-items:center;gap:1px}
.zoom input{appearance:none;width:98px;height:16px;margin:0;background:linear-gradient(#888,#888) 50% 50%/1px 8px no-repeat,linear-gradient(#8a8e94,#8a8e94) 0 50%/100% 1px no-repeat}
.zoom input::-webkit-slider-thumb{appearance:none;width:9px;height:12px;background:#f6f7f8;border:1px solid #666;border-radius:1px 1px 5px 5px}

.taskbar{display:flex;height:40px;flex:none;background:#2a2a2e;color:#fff;font-size:12px}
.taskbar>button{width:48px}
.taskbar>.app{width:49px;position:relative}
.taskbar>.app:nth-child(4){margin-left:2px}
.app.run::after{content:"";position:absolute;left:5px;right:4px;bottom:0;height:3px;background:#76b9ed}
.app.active{background:#505156}
.app.active::after{left:0;right:4px}
.tray{margin-left:auto;display:flex;align-items:center}
.tray button{width:24px;height:40px}
.tray .people{margin-right:12px}
.clock{display:flex;flex-direction:column;align-items:center;width:70px;line-height:18px;font-size:11px}
.tray .notes{width:48px;position:relative}
.notes span{position:absolute;left:22px;top:18px;width:16px;height:16px;border:1px solid #aaa;border-radius:8px;background:#3a3a3e;line-height:14px;font-size:11px}
.tray .peek{width:5px;border-left:1px solid #777}
```
